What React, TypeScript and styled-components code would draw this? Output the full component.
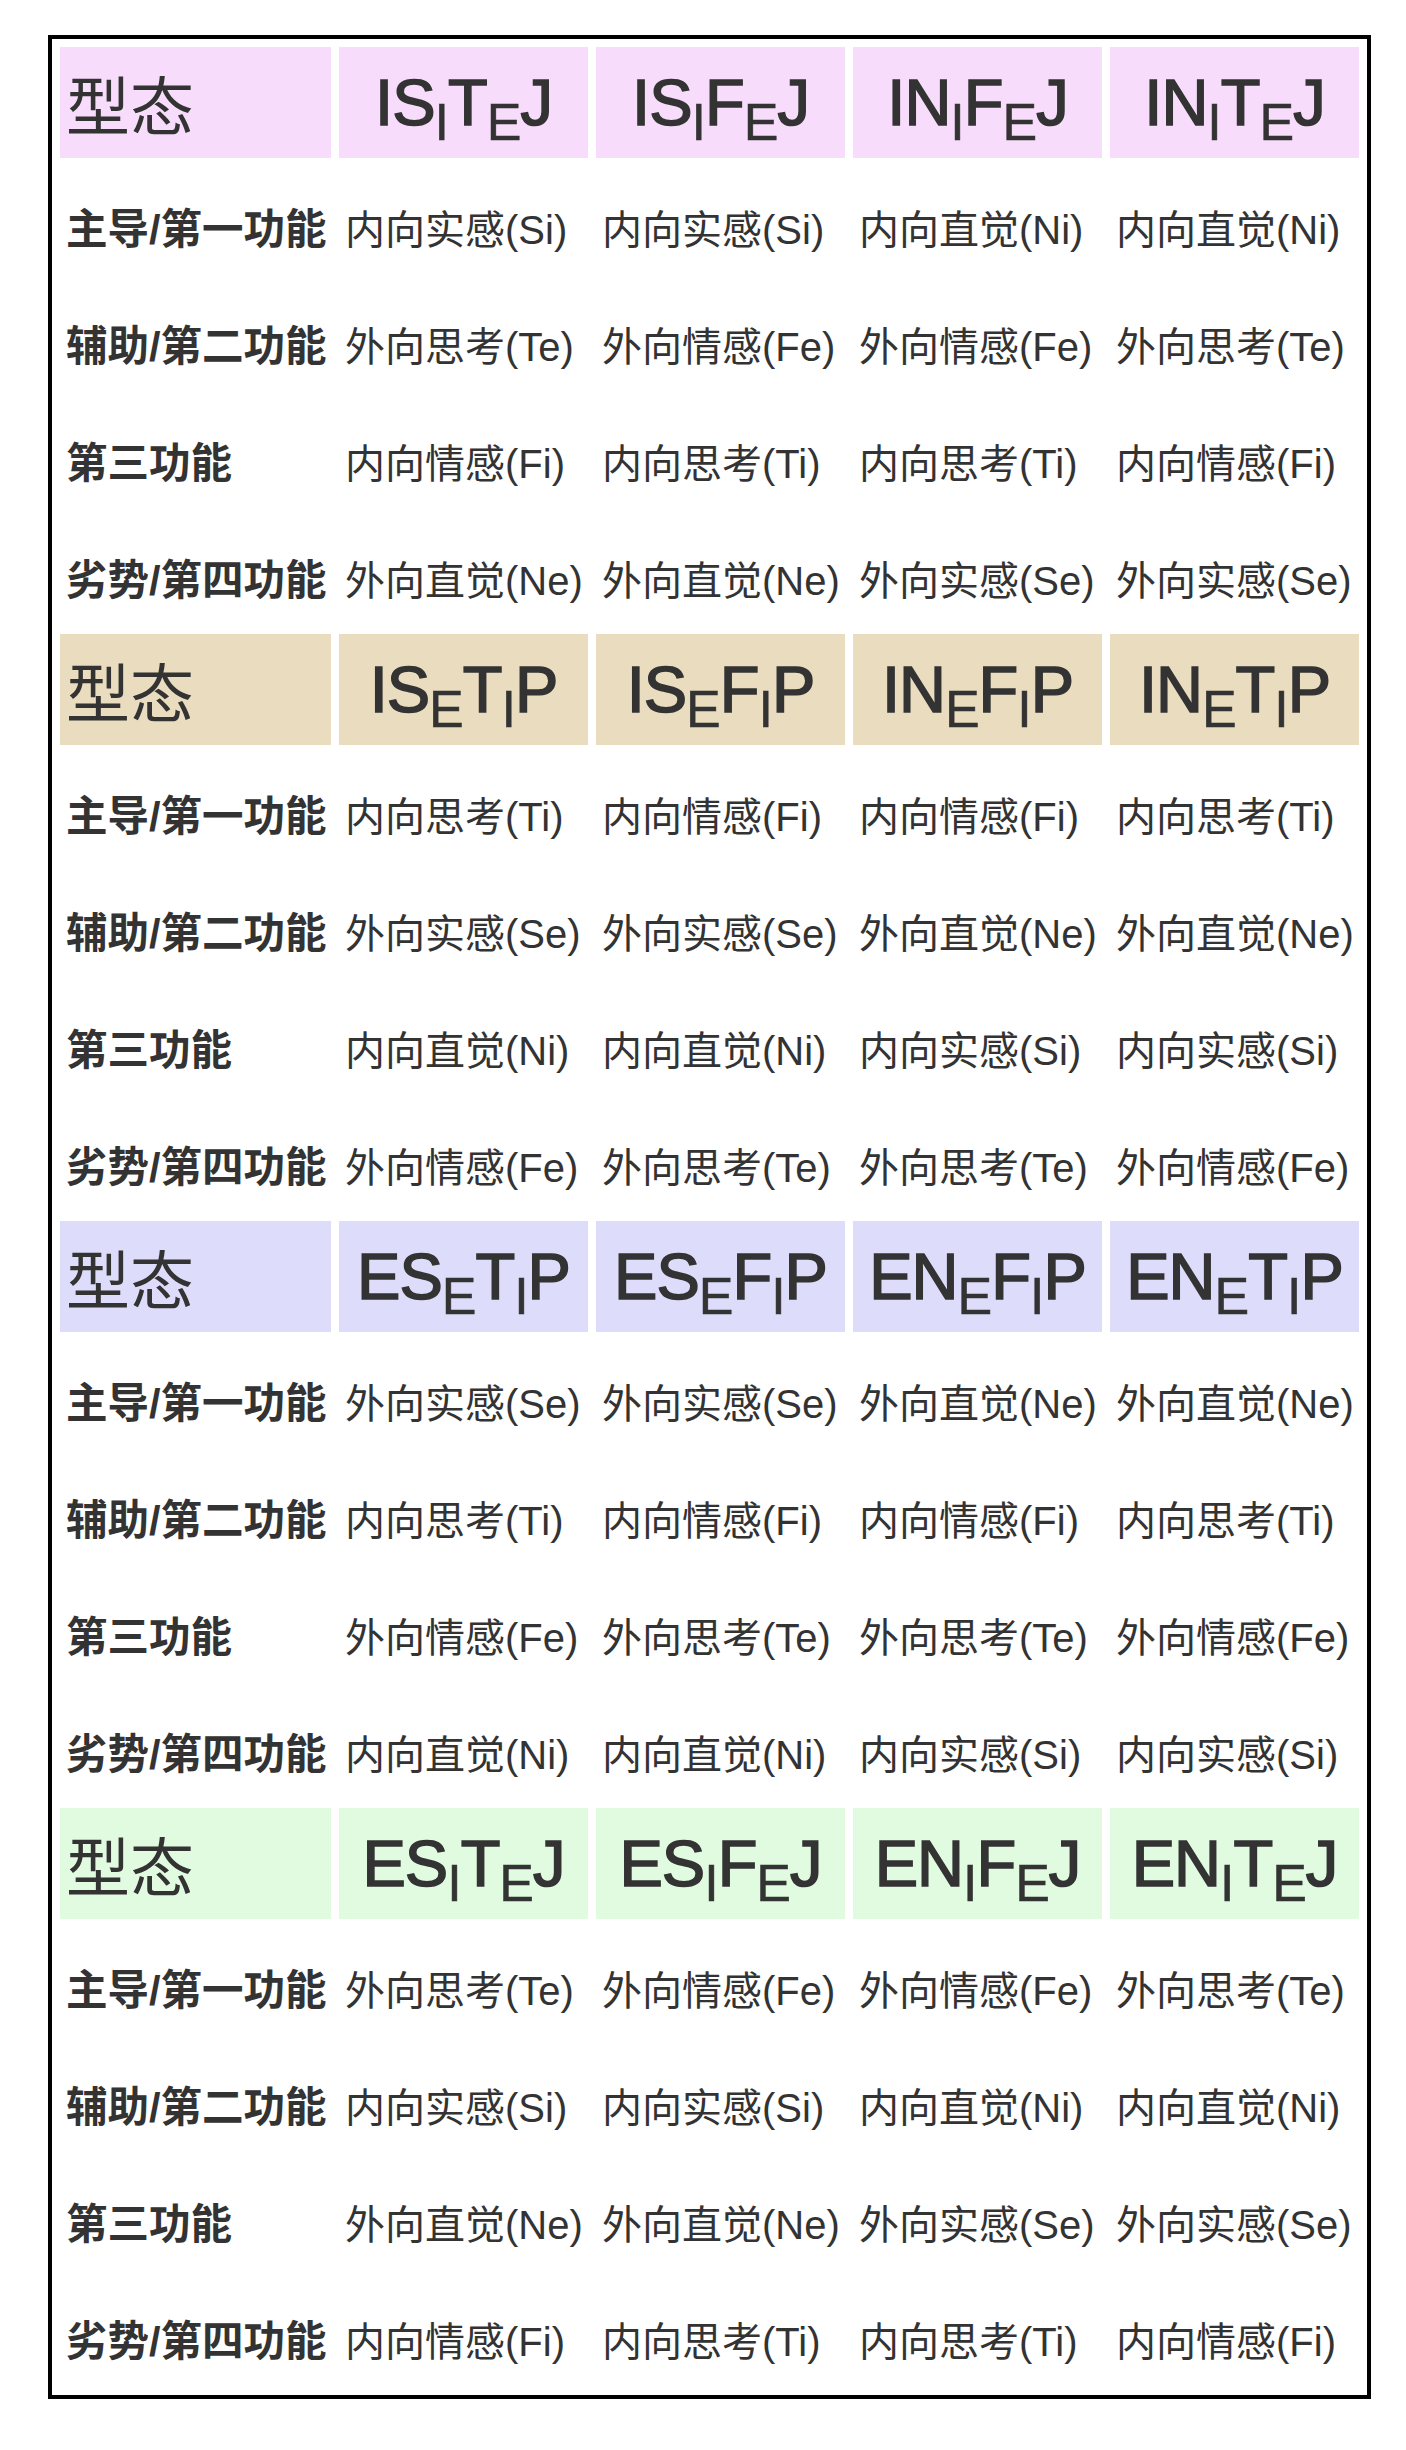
import styled, { createGlobalStyle } from "styled-components";

const GlobalStyle = createGlobalStyle`
  * {
    box-sizing: border-box;
  }
  body {
    margin: 0;
    background: #ffffff;
    font-family: "Liberation Sans", "Noto Sans CJK SC", sans-serif;
    color: #333333;
  }
`;

type Block = {
  bg: string;
  types: string[];
  rows: string[][];
};

const LABELS = ["主导/第一功能", "辅助/第二功能", "第三功能", "劣势/第四功能"];

// "_" marks the next letter as a subscript
const BLOCKS: Block[] = [
  {
    bg: "#f8dcfb",
    types: ["IS_IT_EJ", "IS_IF_EJ", "IN_IF_EJ", "IN_IT_EJ"],
    rows: [
      ["内向实感(Si)", "内向实感(Si)", "内向直觉(Ni)", "内向直觉(Ni)"],
      ["外向思考(Te)", "外向情感(Fe)", "外向情感(Fe)", "外向思考(Te)"],
      ["内向情感(Fi)", "内向思考(Ti)", "内向思考(Ti)", "内向情感(Fi)"],
      ["外向直觉(Ne)", "外向直觉(Ne)", "外向实感(Se)", "外向实感(Se)"],
    ],
  },
  {
    bg: "#e9dcbf",
    types: ["IS_ET_IP", "IS_EF_IP", "IN_EF_IP", "IN_ET_IP"],
    rows: [
      ["内向思考(Ti)", "内向情感(Fi)", "内向情感(Fi)", "内向思考(Ti)"],
      ["外向实感(Se)", "外向实感(Se)", "外向直觉(Ne)", "外向直觉(Ne)"],
      ["内向直觉(Ni)", "内向直觉(Ni)", "内向实感(Si)", "内向实感(Si)"],
      ["外向情感(Fe)", "外向思考(Te)", "外向思考(Te)", "外向情感(Fe)"],
    ],
  },
  {
    bg: "#dddcfb",
    types: ["ES_ET_IP", "ES_EF_IP", "EN_EF_IP", "EN_ET_IP"],
    rows: [
      ["外向实感(Se)", "外向实感(Se)", "外向直觉(Ne)", "外向直觉(Ne)"],
      ["内向思考(Ti)", "内向情感(Fi)", "内向情感(Fi)", "内向思考(Ti)"],
      ["外向情感(Fe)", "外向思考(Te)", "外向思考(Te)", "外向情感(Fe)"],
      ["内向直觉(Ni)", "内向直觉(Ni)", "内向实感(Si)", "内向实感(Si)"],
    ],
  },
  {
    bg: "#e1fbe1",
    types: ["ES_IT_EJ", "ES_IF_EJ", "EN_IF_EJ", "EN_IT_EJ"],
    rows: [
      ["外向思考(Te)", "外向情感(Fe)", "外向情感(Fe)", "外向思考(Te)"],
      ["内向实感(Si)", "内向实感(Si)", "内向直觉(Ni)", "内向直觉(Ni)"],
      ["外向直觉(Ne)", "外向直觉(Ne)", "外向实感(Se)", "外向实感(Se)"],
      ["内向情感(Fi)", "内向思考(Ti)", "内向思考(Ti)", "内向情感(Fi)"],
    ],
  },
];

const Page = styled.div`
  padding: 35px 0 40px 48px;
`;

const Table = styled.table`
  width: 1323px;
  table-layout: fixed;
  border: 4px solid #000000;
  border-spacing: 8px;
`;

const Col = styled.col<{ $w: number }>`
  width: ${(p) => p.$w}px;
`;

const HeadCell = styled.td<{ $bg: string; $center?: boolean }>`
  height: 111px;
  padding: 0 6px;
  background: ${(p) => p.$bg};
  text-align: ${(p) => (p.$center ? "center" : "left")};
  vertical-align: middle;
  white-space: nowrap;
`;

const TitleText = styled.span`
  font-family: "Noto Sans CJK SC", sans-serif;
  font-size: 64px;
  font-weight: 400;
  line-height: 1.2;
`;

const TypeCode = styled.span`
  font-family: "Liberation Sans", sans-serif;
  font-size: 65px;
  font-weight: 400;
  line-height: 1.2;
  -webkit-text-stroke: 1.6px #333333;
  letter-spacing: -1px;
`;

const Sub = styled.span`
  font-size: 0.8em;
  line-height: 0;
  vertical-align: -15px;
  -webkit-text-stroke: 0.5px #333333;
`;

const DataCell = styled.td<{ $label?: boolean }>`
  height: 109px;
  padding: 19px 6px 0;
  vertical-align: middle;
  white-space: nowrap;
  font-size: ${(p) => (p.$label ? 41.5 : 40)}px;
  line-height: 1.2;
  font-weight: ${(p) => (p.$label ? 700 : 400)};
`;

const renderCode = (code: string) => {
  const parts: JSX.Element[] = [];
  let i = 0;
  let k = 0;
  while (i < code.length) {
    if (code[i] === "_") {
      parts.push(<Sub key={k++}>{code[i + 1]}</Sub>);
      i += 2;
    } else {
      parts.push(<span key={k++}>{code[i]}</span>);
      i += 1;
    }
  }
  return parts;
};

const App: React.FC = () => {
  return (
    <>
      <GlobalStyle />
      <Page>
        <Table>
          <colgroup>
            <Col $w={271} />
            <Col $w={249} />
            <Col $w={249} />
            <Col $w={249} />
            <Col $w={249} />
          </colgroup>
          <tbody>
            {BLOCKS.map((block, bi) => (
              <BlockRows key={bi} block={block} />
            ))}
          </tbody>
        </Table>
      </Page>
    </>
  );
};

const BlockRows: React.FC<{ block: Block }> = ({ block }) => {
  return (
    <>
      <tr>
        <HeadCell $bg={block.bg}>
          <TitleText>型态</TitleText>
        </HeadCell>
        {block.types.map((t) => (
          <HeadCell key={t} $bg={block.bg} $center>
            <TypeCode>{renderCode(t)}</TypeCode>
          </HeadCell>
        ))}
      </tr>
      {block.rows.map((row, ri) => (
        <tr key={ri}>
          <DataCell $label>{LABELS[ri]}</DataCell>
          {row.map((v, ci) => (
            <DataCell key={ci}>{v}</DataCell>
          ))}
        </tr>
      ))}
    </>
  );
};

export default App;
